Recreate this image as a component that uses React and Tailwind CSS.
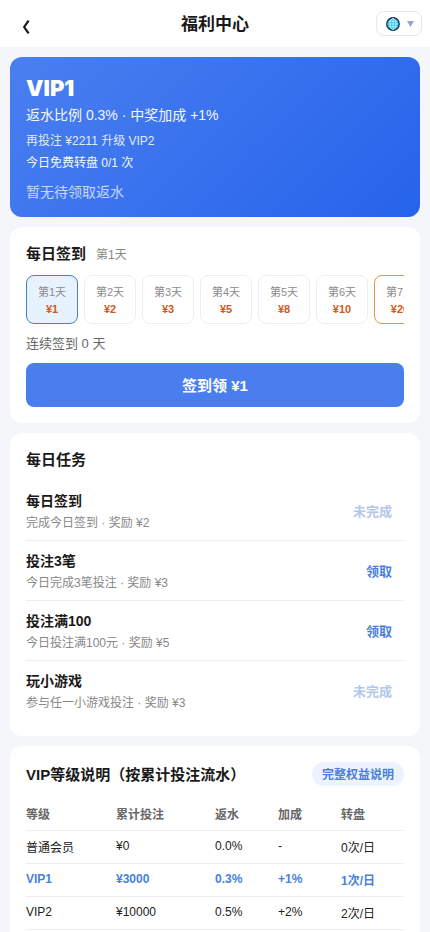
import clsx from 'clsx';

const days = [
  { label: '第1天', reward: '¥1' },
  { label: '第2天', reward: '¥2' },
  { label: '第3天', reward: '¥3' },
  { label: '第4天', reward: '¥5' },
  { label: '第5天', reward: '¥8' },
  { label: '第6天', reward: '¥10' },
  { label: '第7天', reward: '¥20' },
];

const tasks = [
  { title: '每日签到', desc: '完成今日签到 · 奖励 ¥2', done: false },
  { title: '投注3笔', desc: '今日完成3笔投注 · 奖励 ¥3', done: true },
  { title: '投注满100', desc: '今日投注满100元 · 奖励 ¥5', done: true },
  { title: '玩小游戏', desc: '参与任一小游戏投注 · 奖励 ¥3', done: false },
];

const levels = [
  { name: '普通会员', total: '¥0', rebate: '0.0%', bonus: '-', spin: '0次/日' },
  { name: 'VIP1', total: '¥3000', rebate: '0.3%', bonus: '+1%', spin: '1次/日', current: true },
  { name: 'VIP2', total: '¥10000', rebate: '0.5%', bonus: '+2%', spin: '2次/日' },
];

function GlobeIcon() {
  return (
    <svg className="h-3.5 w-3.5" viewBox="0 0 14 14" fill="none">
      <circle cx="7" cy="7" r="6.2" fill="#2fbdeb" stroke="#12354a" strokeWidth="1.4" />
      <g stroke="#c3f2fd" strokeWidth="0.8">
        <path d="M7 1.5v11M1.5 7h11M2.5 4.3h9M2.5 9.7h9" />
        <ellipse cx="7" cy="7" rx="3" ry="5.5" />
      </g>
    </svg>
  );
}

function Header() {
  return (
    <header className="flex h-[47px] items-center justify-between bg-white pr-2 pl-5">
      <button className="flex h-6 w-[34px] items-center pt-1.5">
        <svg className="ml-0.5 h-[14px] w-2" viewBox="0 0 8 14" fill="none" stroke="#1a1a1a" strokeWidth="2.2">
          <path d="M6.6 .6 2.2 7l4.4 6.4" />
        </svg>
      </button>
      <h1 className="pt-0.5 text-[17px] leading-6 font-bold">福利中心</h1>
      <button className="flex h-[25px] w-[46px] items-center gap-[7px] rounded-lg border border-[#e4e7ee] pl-[9px]">
        <GlobeIcon />
        <svg className="h-1.5 w-[7px]" viewBox="0 0 7 6" fill="#8fa5dc">
          <path d="M0 0h7L3.5 6z" />
        </svg>
      </button>
    </header>
  );
}

function VipCard() {
  return (
    <section className="h-40 rounded-xl bg-linear-135 from-[#4a7ff0] to-[#2563eb] px-4 pt-[18px] text-white">
      <div className="h-[29px] font-[Inter] text-[22px] leading-[26px] font-black">VIP1</div>
      <p className="text-sm leading-[22px] opacity-95">返水比例 0.3% · 中奖加成 +1%</p>
      <p className="mt-1 text-xs leading-[22px] opacity-85">再投注 ¥2211 升级 VIP2</p>
      <p className="text-xs leading-[22px] opacity-95">今日免费转盘 0/1 次</p>
      <p className="mt-[7px] text-sm leading-[22px] opacity-70">暂无待领取返水</p>
    </section>
  );
}

function CheckIn() {
  return (
    <section className="h-[196px] rounded-xl bg-white px-4 pt-4">
      <div className="flex h-8 items-start gap-[10px]">
        <h2 className="text-[15px] leading-[22px] font-bold">每日签到</h2>
        <span className="text-xs leading-[25px] text-[#888]">第1天</span>
      </div>
      <div className="flex gap-1.5 overflow-hidden">
        {days.map((day, i) => (
          <div
            key={day.label}
            className={clsx(
              'h-[49px] w-[52px] shrink-0 rounded-lg border pt-2 text-center text-[11px]',
              i === 0 && 'border-[#4a7fc6] bg-[#e6f2fd]',
              i === 6 && 'border-[#dc9a3c]',
              i > 0 && i < 6 && 'border-[#ededf0]'
            )}
          >
            <div className="leading-[17px] text-[#8c8c8c]">{day.label}</div>
            <div className="leading-[17px] font-bold text-[#d4581c]">{day.reward}</div>
          </div>
        ))}
      </div>
      <p className="mt-[9px] text-[13px] leading-[22px] text-[#666]">连续签到 0 天</p>
      <button className="mt-2 h-11 w-full rounded-lg bg-[#4a7eee] pt-0.5 text-[15px] font-bold text-white">签到领 ¥1</button>
    </section>
  );
}

function Tasks() {
  return (
    <section className="h-[303px] rounded-xl bg-white px-4 pt-4">
      <h2 className="h-8 text-[15px] leading-[22px] font-bold">每日任务</h2>
      {tasks.map((task) => (
        <div key={task.title} className="flex h-[60px] items-center justify-between border-b border-[#efeff1] last:border-b-0">
          <div className="pt-0.5">
            <h3 className="text-sm leading-[22px] font-bold">{task.title}</h3>
            <p className="text-xs leading-[22px] text-[#888]">{task.desc}</p>
          </div>
          <button className={clsx('px-3 pt-0.5 text-[13px] font-bold', task.done ? 'text-[#4a7fdc]' : 'text-[#b3c7eb]')}>
            {task.done ? '领取' : '未完成'}
          </button>
        </div>
      ))}
    </section>
  );
}

function VipLevels() {
  const cols = 'grid grid-cols-[90px_99px_63px_63px_63px] border-b border-[#eeeef0] text-xs';
  return (
    <section className="rounded-xl bg-white px-4 pt-4 pb-4">
      <div className="flex h-6 items-center justify-between">
        <h2 className="pt-0.5 text-[15px] leading-[22px] font-bold">VIP等级说明（按累计投注流水）</h2>
        <a className="h-6 rounded-full bg-[#edf3fe] px-[10px] text-xs leading-[26px] font-bold text-[#4a7fdc]">完整权益说明</a>
      </div>
      <div className={clsx(cols, 'mt-[13px] h-8 leading-8 font-bold text-[#666]')}>
        <span>等级</span>
        <span>累计投注</span>
        <span>返水</span>
        <span>加成</span>
        <span>转盘</span>
      </div>
      {levels.map((level) => (
        <div
          key={level.name}
          className={clsx(cols, 'h-[33px] leading-[30px]', level.current ? 'font-bold text-[#4a7fdc]' : 'text-[#222]')}
        >
          <span className={clsx(level.name === '普通会员' && 'pt-0.5')}>{level.name}</span>
          <span>{level.total}</span>
          <span>{level.rebate}</span>
          <span>{level.bonus}</span>
          <span className="pt-0.5">{level.spin}</span>
        </div>
      ))}
    </section>
  );
}

export default function App() {
  return (
    <div className="h-screen overflow-hidden bg-[#f4f6fa] font-['Liberation_Sans','Noto_Sans_CJK_SC',sans-serif] text-[#1a1a1a]">
      <Header />
      <main className="flex flex-col gap-[10px] p-[10px]">
        <VipCard />
        <CheckIn />
        <Tasks />
        <VipLevels />
      </main>
    </div>
  );
}
